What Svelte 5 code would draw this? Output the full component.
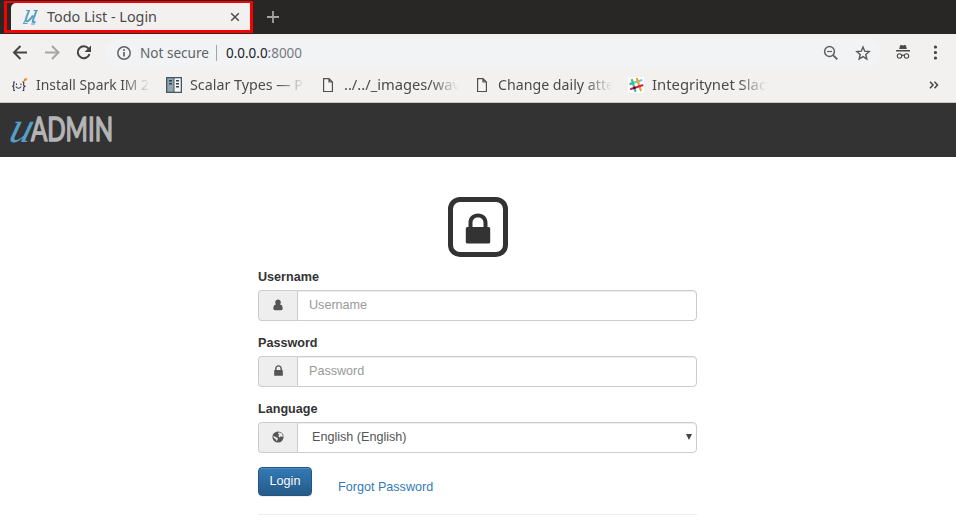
<script>
  const fields = [
    { id: 'username', label: 'Username', type: 'text', icon: 'user' },
    { id: 'password', label: 'Password', type: 'password', icon: 'lock' }
  ];
  const bookmarks = [
    { icon: 'spark', text: 'Install Spark IM 2', w: 113 },
    { icon: 'book', text: 'Scalar Types — P', w: 113 },
    { icon: 'page', text: '../../_images/wav', w: 116 },
    { icon: 'page', text: 'Change daily atte', w: 116 },
    { icon: 'slack', text: 'Integritynet Slac', w: 114 }
  ];
</script>

{#snippet line(text, w, color)}
  <svg class="line" width={w} height="22" fill={color}>
    <text x="0" y="16" textLength={w} lengthAdjust="spacingAndGlyphs">{text}</text>
  </svg>
{/snippet}

{#snippet lock(w, h)}
  <svg width={w} height={h} viewBox="0 0 25 31">
    <path fill="currentColor" fill-rule="evenodd" d="M3 14V10C3 4 7 .5 12.5.5S22 4 22 10v4h1.200q1.500 0 1.500 1.500v13.500q0 1.500-1.500 1.500H1.800Q.3 30.500.3 29V15.500Q.3 14 1.800 14zM7 14h11v-4c0-3.500-2.200-5.500-5.500-5.500S7 6.500 7 10z" />
  </svg>
{/snippet}

<div class="window">
  <div class="tabs">
    <div class="tab">
      <div class="tab-face">
        <svg class="favicon" width="16" height="16" viewBox="0 0 16 16" fill="none" stroke="#559fc9">
          <path stroke-width="2" d="M6 1.500 3 9.500Q2 13 5 12 7.500 10.500 10 6.500M13.500 1.500 10 11Q9 14.500 12.500 12.500" />
          <path stroke-width="1.200" d="M3 1.500h4M10.500 1.500H15M2.500 11 .5 14.500h4M8 15h4" />
        </svg>
        <span class="tab-title">{@render line('Todo List - Login', 110, '#4b4b4b')}</span>
        <svg class="close" width="10" height="10" viewBox="0 0 10 10" stroke="#4b4b4b" stroke-width="1.500">
          <path d="m1.200 1.200 7.600 7.600M8.800 1.200 1.200 8.800" />
        </svg>
      </div>
    </div>
    <svg class="plus" width="12" height="12" viewBox="0 0 12 12" stroke="#a3a3a1" stroke-width="1.800">
      <path d="M6 0v12M0 6h12" />
    </svg>
  </div>

  <div class="toolbar">
    <svg class="nav" width="96" height="32" viewBox="0 0 96 32" fill="none" stroke="#454545" stroke-width="2">
      <path d="M27 15.500H14.500M20.500 9 14 15.500l6.500 6.500" />
      <path stroke="#a7a6a5" d="M45 15.500h13M52 9l6.500 6.500-6.500 6.500" />
      <path d="M88.500 11.500A6 6 0 1 0 89.500 17" />
      <path fill="#454545" stroke="none" d="M91 8.500v6.500h-6.500z" />
    </svg>
    <div class="address">
      <svg class="info" width="16" height="16" viewBox="0 0 16 16" fill="none" stroke="#5f6368" stroke-width="1.500">
        <circle cx="8" cy="8" r="6.200" />
        <path stroke-width="1.700" d="M8 7v4.500M8 4.300v1.600" />
      </svg>
      <span class="secure">{@render line('Not secure', 69, '#5f6368')}</span>
      <i class="divider"></i>
      <svg class="line" width="76" height="22">
        <text x="0" y="16" textLength="76" lengthAdjust="spacingAndGlyphs"><tspan fill="#202124">0.0.0.0</tspan><tspan fill="#777a7e">:8000</tspan></text>
      </svg>
      <svg class="zoom" width="16" height="16" viewBox="0 0 16 16" fill="none" stroke="#5f6368">
        <circle cx="6.500" cy="6.500" r="4.900" stroke-width="1.500" />
        <path stroke-width="1.900" d="m10.300 10.300 4 4" />
        <path stroke-width="1.200" d="M4 6.500h5" />
      </svg>
      <svg class="star" width="16" height="16" viewBox="0 0 16 16" fill="none" stroke="#55585c" stroke-width="1.400">
        <path d="m8 2 1.700 4.200 4.500.3-3.400 3 1 4.500L8 11.600 4.200 14l1-4.500-3.400-3 4.500-.3z" />
      </svg>
    </div>
    <svg class="incognito" width="14" height="16" viewBox="0 0 14 16">
      <path fill="#4a4a4a" d="M4 1.500q.5-.8 1.300-.5L7 1.500 8.700 1q.8-.3 1.300.5L10.800 5H3.200zM0 6h14v1.500H0z" />
      <g fill="none" stroke="#4a4a4a" stroke-width="1.100">
        <circle cx="3.500" cy="12" r="2.200" /><circle cx="10.500" cy="12" r="2.200" /><path d="M5.700 11.500q1.300-.8 2.600 0" />
      </g>
    </svg>
    <svg class="dots" width="4" height="16" viewBox="0 0 4 16" fill="#454545">
      <circle cx="1.500" cy="2" r="1.600" /><circle cx="1.500" cy="7.500" r="1.600" /><circle cx="1.500" cy="13" r="1.600" />
    </svg>
  </div>

  <div class="bookmarks">
    {#each bookmarks as b}
      <div class="bookmark">
        <svg width="16" height="16" viewBox="0 0 16 16">
          {#if b.icon === 'spark'}
            <path fill="none" stroke="#35354d" stroke-width="1.100" d="M3 5H1.800V8.500L.5 9.300l1.300.9v3.300H3M10.500 5h1.200v3.500l1.300.8-1.300.9v3.300h-1.200M3.800 9.500q2.700 3.500 5.400 0M4.500 6.500V8M9 6.500V8" />
            <path fill="#f58220" d="m11.500 4 .7-2.200L15 1l-.5 2.500-2 .8z" />
          {:else if b.icon === 'book'}
            <path fill="#465762" d="M0 0h16v16H0z" />
            <path fill="#8fa5af" d="M1.300 1.300h6.200v13.400H1.300z" />
            <path fill="#f5f6f6" d="M8.500 1.300h6.200v13.400H8.500z" />
            <path fill="#34434e" d="M3 3h3v1.500H3zM3 6h3v1.500H3zM10 3h3v1.500h-3zM10 6h3v1.500h-3zM10 9h3v1.500h-3z" />
          {:else if b.icon === 'page'}
            <path fill="#f6f5f4" stroke="#505050" stroke-width="1.200" d="M3.600 1.600h5.400l3.400 3.400v9.500H3.600zM9 1.600V5h3.400" />
          {:else}
            <rect width="16" height="16" rx="2" fill="#fff" />
            <g stroke-width="2.200" stroke-linecap="round">
              <path stroke="#70cadb" d="m2.500 6.800 11-3.600" />
              <path stroke="#3eb991" d="m4 3 3.300 11M2.500 6.900l3-1" />
              <path stroke="#e9a820" d="m9 1.800 3.800 11.500" />
              <path stroke="#e01765" d="m3 12 11.500-3.700" />
              <path stroke="#361238" d="m6 11 .8-.2" />
            </g>
          {/if}
        </svg>
        <span class="fade">{@render line(b.text, b.w, '#4b4b4b')}</span>
      </div>
    {/each}
    <svg class="more" width="10" height="10" viewBox="0 0 10 10" fill="none" stroke="#454545" stroke-width="1.500">
      <path d="m1 1.800 3 3.200-3 3.200M5.500 1.800l3 3.200-3 3.200" />
    </svg>
  </div>
</div>

<header>
  <svg width="110" height="36" viewBox="0 0 110 36">
    <text class="logo-u" transform="translate(-.5 28) skewX(-16)">u</text>
    <text class="logo-admin" x="23" y="27" textLength="82" lengthAdjust="spacingAndGlyphs">ADMIN</text>
  </svg>
</header>

<main>
  <div class="badge">{@render lock(26, 31)}</div>
  <form onsubmit={(e) => e.preventDefault()}>
    {#each fields as f}
      <div class="field">
        <label for={f.id}>{f.label}</label>
        <div class="group">
          <span class="addon">
            {#if f.icon === 'user'}
              <svg width="10" height="12" viewBox="0 0 10 12" fill="currentColor">
                <path d="M5 .5a2.800 2.800 0 0 1 1.900 4.900Q9.600 5.500 9.700 9.500q0 1.800-1.500 1.800H1.800Q.3 11.300.3 9.500.4 5.500 3.100 5.400A2.800 2.800 0 0 1 5 .5" />
              </svg>
            {:else}
              {@render lock(9, 11)}
            {/if}
          </span>
          <input id={f.id} type={f.type} placeholder={f.label} />
        </div>
      </div>
    {/each}
    <div class="field">
      <label for="language">Language</label>
      <div class="group">
        <span class="addon">
          <svg width="12" height="12" viewBox="0 0 12 12">
            <circle cx="6" cy="6" r="5.600" fill="#555" />
            <path fill="#eee" d="M6.800 1.200 9.500 2.300 10.800 4.500 10.300 6 8.800 5.300 7.500 6.500 6.300 5 7.500 3.800 6 3zM1.300 4.800 3.500 6 5.500 6.800 5.800 8.300 4.500 10.300 3.800 8.300 1.700 6.800z" />
          </svg>
        </span>
        <div class="select" id="language">
          <span>English (English)</span>
          <svg width="6" height="6" viewBox="0 0 6 6" fill="#444"><path d="M0 0h6L3 6z" /></svg>
        </div>
      </div>
    </div>
    <div class="actions">
      <button type="submit">Login</button>
      <a href="#forgot">Forgot Password</a>
    </div>
    <hr />
  </form>
</main>

<style>
  :global(body) {
    margin: 0;
    overflow: hidden;
    background: #fff;
    color: #333;
    font: 12.6px/18px "Liberation Sans", Arial, sans-serif;
  }
  svg { display: block; flex: none; }
  .window { background: #f2f1f0; border-bottom: 1px solid #c9c8c7; }
  .line { overflow: visible; font: 15px "Noto Sans", "Open Sans", sans-serif; }
  .tabs {
    display: flex;
    align-items: flex-start;
    height: 34px;
    box-sizing: border-box;
    padding: 1px 0 0 4px;
    background: #282725;
  }
  .tab {
    width: 249px;
    height: 32px;
    box-sizing: border-box;
    border: 3px solid #f90000;
    border-top-width: 2px;
    padding-left: 4px;
  }
  .tab-face {
    display: flex;
    height: 100%;
    box-sizing: border-box;
    padding: 6px 10px 0 12px;
    background: #f2f1f0;
    border-radius: 5px 0 0 0;
  }
  .tab-title { margin: -3px 0 0 8px; }
  .close { margin: 3px 0 0 auto; }
  .plus { margin: 10px 0 0 14px; }
  .toolbar { display: flex; align-items: center; height: 36px; padding-right: 18px; }
  .nav { margin: 1px 10px 0 0; }
  .address {
    display: flex;
    align-items: center;
    flex: 1;
    height: 29px;
    box-sizing: border-box;
    margin-top: 2px;
    padding: 0 10px;
    border-radius: 15px;
    background: #f1f3f4;
  }
  .secure { margin-left: 8px; }
  .divider { width: 1px; height: 16px; margin: 0 9px 0 7px; background: #a2a4a6; }
  .zoom { margin: 0 16px 0 auto; }
  .incognito { margin-left: 15px; }
  .dots { margin: 2px 0 0 24px; }
  .bookmarks { display: flex; align-items: center; height: 32px; padding: 0 17px 0 12px; }
  .bookmark { display: flex; align-items: center; width: 154px; height: 22px; margin-top: -2px; }
  .fade {
    width: 117px;
    height: 22px;
    margin-left: 8px;
    -webkit-mask-image: linear-gradient(90deg, #000 74%, transparent 98%);
    mask-image: linear-gradient(90deg, #000 74%, transparent 98%);
  }
  .more { margin: -2px 0 0 auto; }
  header { height: 54px; box-sizing: border-box; padding: 9px 8px 0; background: #333; }
  header svg { overflow: visible; margin-top: 2px; }
  .logo-u { font: italic 44px "Liberation Serif", serif; fill: #559fc9; }
  .logo-admin {
    font: 32px Lato, sans-serif;
    fill: #b5b5b5;
    stroke: #b5b5b5;
    stroke-width: 1.5px;
    stroke-linejoin: round;
  }
  main { display: flex; flex-direction: column; align-items: center; padding: 40px 1px 0 0; }
  .badge {
    display: flex;
    justify-content: center;
    align-items: center;
    width: 60px;
    height: 60px;
    box-sizing: border-box;
    padding-top: 3px;
    border: 5px solid #333;
    border-radius: 12px;
  }
  form { width: 439px; margin-top: 11px; }
  .field { margin-bottom: 13px; }
  label { display: block; height: 22px; font-weight: bold; }
  .group { display: flex; height: 31px; }
  .addon {
    display: flex;
    justify-content: center;
    align-items: center;
    width: 39px;
    box-sizing: border-box;
    padding-bottom: 2px;
    border: 1px solid #ccc;
    border-right: 0;
    border-radius: 4px 0 0 4px;
    background: #eee;
    color: #555;
  }
  input, .select {
    flex: 1;
    min-width: 0;
    height: 31px;
    box-sizing: border-box;
    margin: 0;
    padding: 0 11px 2px;
    border: 1px solid #ccc;
    border-radius: 0 4px 4px 0;
    outline: 0;
    background: #fff;
    color: #555;
    font: 12.6px "Liberation Sans", Arial, sans-serif;
    box-shadow: inset 0 1px 1px rgba(0, 0, 0, 0.075);
  }
  input::placeholder { color: #999; opacity: 1; }
  .select { display: flex; align-items: center; justify-content: space-between; padding: 0 4px 2px 14px; }
  .actions { display: flex; height: 47px; margin-top: 14px; }
  button {
    width: 54px;
    height: 29px;
    padding: 0 0 1px;
    border: 1px solid #245580;
    border-radius: 4px;
    background: linear-gradient(#337ab7, #265a88);
    box-shadow: inset 0 1px 0 rgba(255, 255, 255, 0.15), 0 1px 1px rgba(0, 0, 0, 0.075);
    color: #fff;
    font: 12.6px "Liberation Sans", Arial, sans-serif;
    text-shadow: 0 -1px 0 rgba(0, 0, 0, 0.2);
  }
  a { margin: 11px 0 0 26px; color: #337ab7; text-decoration: none; }
  hr { height: 1px; margin: 0; border: 0; background: #eee; }
</style>
